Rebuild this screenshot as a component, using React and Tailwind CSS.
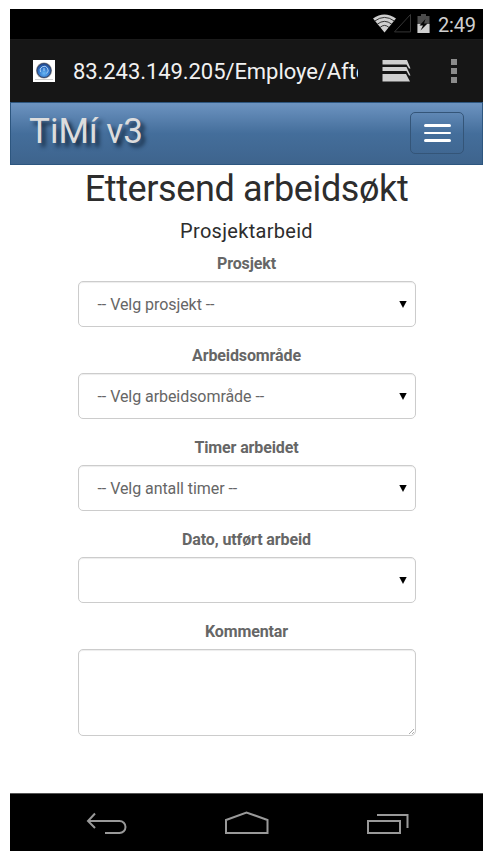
const fields = [
  { label: 'Prosjekt', value: '-- Velg prosjekt --' },
  { label: 'Arbeidsområde', value: '-- Velg arbeidsområde --' },
  { label: 'Timer arbeidet', value: '-- Velg antall timer --' },
  { label: 'Dato, utført arbeid', value: '' },
];

function StatusBar() {
  return (
    <div className="flex h-[30px] items-center bg-black pl-[363px]">
      <svg className="h-[30px] w-[68px] shrink-0" viewBox="0 0 68 30">
        <path d="M0 9.5Q11.300 1.500 23 9.500L11.500 23.500Z" fill="#cfcfcf" />
        <g fill="none" stroke="#222" strokeWidth=".9">
          <path d="M1.800 12Q11.500 4.800 21.300 12" />
          <path d="M4.300 15.200Q11.500 9.500 18.800 15.200" />
          <path d="M7 18.500Q11.500 14.300 16 18.500" />
        </g>
        <path d="M21.500 22.900L37.500 5.500V22.900Z" fill="none" stroke="#363636" />
        <path d="M44.500 7H48V5H53V7H56.500V24H44.500Z" fill="#4c4c4c" />
        <path d="M44.500 15H56.500V24H44.500Z" fill="#cfcfcf" />
        <path d="M52.500 10L46.500 16.500H50L47.500 21.500L54.500 14.500H51Z" fill="#050505" />
      </svg>
      <span className="ml-[-3px] mt-[2px] text-[20px] leading-none tracking-[-0.2px] text-[#cfcfcf]">2:49</span>
    </div>
  );
}

function AddressBar() {
  return (
    <div className="flex h-[63px] items-center border-t border-[#1b1b1b] bg-[#161616] pl-[23px]">
      <svg className="h-[22px] w-[22px] shrink-0" viewBox="0 0 22 22">
        <defs>
          <radialGradient id="clock" cx=".5" cy=".7" r=".7">
            <stop offset="0" stopColor="#69b8f5" />
            <stop offset=".5" stopColor="#3478cb" />
            <stop offset="1" stopColor="#1d4590" />
          </radialGradient>
        </defs>
        <rect width="22" height="22" fill="#fff" />
        <path d="M2 19.500H20" stroke="#ccc" />
        <circle cx="11" cy="10.500" r="8" fill="#999" />
        <circle cx="11" cy="10.500" r="7" fill="url(#clock)" stroke="#32466f" />
        <path d="M7.500 12A4 4 0 1 1 13.500 13.500M11 8V11" fill="none" stroke="#a9cff5" />
      </svg>
      <div className="mt-[2px] ml-[18px] w-[285px] overflow-hidden whitespace-nowrap text-[22px] leading-[32px] tracking-[-0.07px] text-[#f1f1f1]">
        83.243.149.205/Employe/Afte
      </div>
      <svg className="ml-[24px] h-[24px] w-[30px] shrink-0" viewBox="0 0 30 24" fill="#d0d0d0">
        <path d="M.5 1H25L28.500 9.500L27 9.500L24.500 5.500H.5Z" />
        <path d="M.5 8H24.500L28.500 16.500L27 16.500L24.500 12H.5Z" />
        <path d="M.5 15H24L28 22.500H.5Z" />
      </svg>
      <div className="ml-[39px] flex flex-col gap-[3px]">
        <i className="h-1.5 w-1.5 bg-[#8c8c8c]" />
        <i className="h-1.5 w-1.5 bg-[#8c8c8c]" />
        <i className="h-1.5 w-1.5 bg-[#8c8c8c]" />
      </div>
    </div>
  );
}

function Navbar() {
  return (
    <header className="flex h-[63px] items-center justify-between border border-[#2d567f] bg-linear-to-b from-[#6d94c1] via-[#446e9b] to-[#3e648d] pr-[18px] pl-[18px]">
      <span className="mt-[-4px] text-[35px] leading-[44px] text-[#dddddd] [text-shadow:4px_4px_4px_#142940]">TiMí v3</span>
      <button className="mt-[-1px] flex h-[42px] w-[54px] flex-col items-center justify-center gap-[5px] rounded-[5px] border border-[#345578]">
        <i className="h-[2.500px] w-[27px] rounded-full bg-white" />
        <i className="h-[2.500px] w-[27px] rounded-full bg-white" />
        <i className="h-[2.500px] w-[27px] rounded-full bg-white" />
      </button>
    </header>
  );
}

function SelectField({ label, value }) {
  return (
    <div className="h-[92px]">
      <div className="h-[30px] pt-px text-center text-[16px] leading-[24px] font-bold tracking-[-0.12px] text-[#666]">{label}</div>
      <div className="flex h-[46px] items-center justify-between rounded-[5px] border border-[#ccc] bg-white pr-[8px] pl-[19px] text-[16px] tracking-[-0.06px] text-[#666] shadow-[inset_0_1px_1px_#00000013]">
        <span className="pt-[2px]">{value}</span>
        <svg className="h-[7px] w-[8px]" viewBox="0 0 8 7">
          <path d="M.3 0H7.700L4 7Z" fill="#000" />
        </svg>
      </div>
    </div>
  );
}

function SystemNav() {
  return (
    <footer className="flex h-[58px] items-center border-t border-[#555] bg-black pl-[75px]">
      <svg className="h-[30px] w-[324px]" viewBox="0 0 324 30" fill="none" stroke="#999" strokeWidth="2">
        <path d="M10 5.500L3 13L10 20M3 13H34.500A6 6 0 0 1 34.500 25H20" />
        <path d="M141 25V12L161.500 4.500L182.500 12V25Z" />
        <path d="M283 13H315V25H283ZM292 7H322.500V20" />
      </svg>
    </footer>
  );
}

export default function App() {
  return (
    <div className="flex h-[861px] w-[490px] bg-white pt-[9px] pl-[10px] font-['Roboto','Open_Sans',sans-serif]">
      <div className="flex h-[842px] w-[473px] flex-col">
        <StatusBar />
        <AddressBar />
        <Navbar />
        <main className="flex-1 overflow-hidden bg-white">
          <h1 className="mt-[2px] h-[44px] text-center text-[36px] leading-[44px] tracking-[-0.38px] whitespace-nowrap text-[#2d2d2d]">Ettersend arbeidsøkt</h1>
          <h2 className="mt-[6px] h-[28px] text-center text-[20px] leading-[28px] tracking-[0.3px] text-[#2d2d2d]">Prosjektarbeid</h2>
          <form className="mx-auto mt-[6px] w-[338px]">
            {fields.map((field) => (
              <SelectField key={field.label} {...field} />
            ))}
            <div className="h-[30px] pt-px text-center text-[16px] leading-[24px] font-bold tracking-[-0.12px] text-[#666]">Kommentar</div>
            <div className="relative">
              <textarea className="block h-[87px] w-full resize-none rounded-[5px] border border-[#ccc] bg-white shadow-[inset_0_1px_1px_#00000013]" />
              <svg className="absolute right-[2px] bottom-[2px] h-[5px] w-[5px]" viewBox="0 0 5 5" stroke="#999" strokeWidth=".8">
                <path d="M0 5L5 0M3 5L5 3" />
              </svg>
            </div>
          </form>
        </main>
        <SystemNav />
      </div>
    </div>
  );
}
